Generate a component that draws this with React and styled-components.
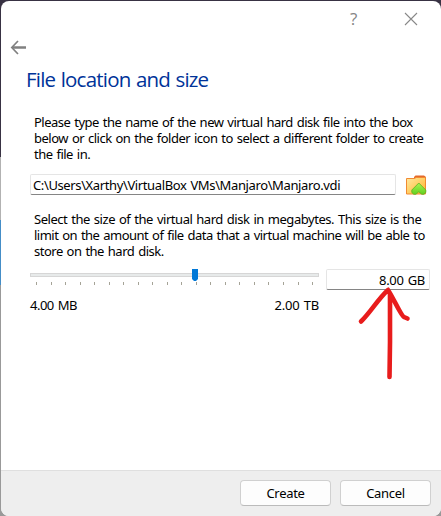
import React from "react";
import styled, { createGlobalStyle } from "styled-components";

const GlobalStyle = createGlobalStyle`
  * { box-sizing: border-box; }
  body { margin: 0; overflow: hidden; }
`;

const Desktop = styled.div`
  width: 441px;
  height: 516px;
  padding: 1px 0 0 1px;
  background: linear-gradient(#383243 0 157px, #b2b2b2 157px 220px, #448dc7 220px 285px, #999 285px);
  font-family: "Noto Sans", sans-serif;
  font-size: 13px;
  color: #000;
`;

const Dialog = styled.main`
  display: flex;
  flex-direction: column;
  height: 515px;
  overflow: hidden;
  border-radius: 8px;
  background: #fff;
`;

const TitleBar = styled.header`
  display: flex;
  flex: none;
  justify-content: flex-end;
  align-items: center;
  height: 35px;
  padding: 1px 23px 0 0;
  gap: 46px;
`;

const HelpMark = styled.span`
  width: 8px;
  color: #858585;
  font: 17px/34px "Open Sans", sans-serif;
`;

const BackRow = styled.div`
  height: 22px;
  padding: 4px 0 0 9px;
  svg { display: block; }
`;

const Heading = styled.h1`
  margin: 5px 0 1px 25px;
  height: 32px;
  font: 400 20.5px/32px "Open Sans", sans-serif;
  letter-spacing: -0.78px;
  word-spacing: 0.8px;
  color: #003399;
  white-space: nowrap;
`;

const Paragraph = styled.p`
  margin: ${(p) => p.$top}px 0 0 33px;
`;

const Line = styled.span`
  display: block;
  height: 16px;
  line-height: 16px;
  white-space: pre;
  letter-spacing: ${(p) => p.$spacing ?? -0.5}px;
  word-spacing: 1px;
`;

const FileRow = styled.div`
  display: flex;
  align-items: center;
  height: 21px;
  margin: 12px 0 0 29px;
  gap: 10px;
`;

const Field = styled.div`
  flex: none;
  width: ${(p) => p.$width}px;
  height: ${(p) => p.$height}px;
  padding: ${(p) => p.$pad};
  border: 1px solid #e5e5e5;
  border-bottom-color: #858585;
  border-radius: 2px;
  background: #fff;
  text-align: ${(p) => p.$align || "left"};
`;

const SizeRow = styled.div`
  display: flex;
  margin: 10px 0 0 29px;
  height: 52px;
  gap: 7px;
`;

const SliderColumn = styled.div`
  width: 289px;
  svg { display: block; }
`;

const Range = styled.div`
  display: flex;
  justify-content: space-between;
  margin-top: 10px;
`;

const Arrow = styled.svg`
  position: absolute;
  left: 350px;
  top: 280px;
`;

const Footer = styled.footer`
  display: flex;
  justify-content: flex-end;
  height: 46px;
  margin-top: auto;
  padding: 9px 10px 0 0;
  gap: 9px;
  border-top: 1px solid #dfdfdf;
  background: #eeeeee;
`;

const Button = styled.button`
  width: 91px;
  height: 26px;
  padding: 0 0 1px;
  border: 1px solid #d0d0d0;
  border-bottom-color: #bbb;
  border-radius: 4px;
  background: #fdfdfd;
  font: 13px/22px "Noto Sans", sans-serif;
  letter-spacing: -0.3px;
  color: #000;
`;

const ticks = Array.from({ length: 20 }, (_, i) => Math.round(6 + i * 14.53));

const FolderIcon = () => (
  <svg width="21" height="21" viewBox="0 0 21 21">
    <defs>
      <linearGradient id="folder" x1="0" y1="0" x2="1" y2="1">
        <stop offset="0" stopColor="#ffe9a0" />
        <stop offset="1" stopColor="#ffb52b" />
      </linearGradient>
      <linearGradient id="chevron" x1="0" y1="0" x2="0" y2="1">
        <stop offset="0" stopColor="#a8f552" />
        <stop offset="1" stopColor="#62cf20" />
      </linearGradient>
    </defs>
    <path d="M8 4V3L9.500 1.500H18L20 3v16H8z" fill="#e4692b" />
    <path d="M.5 4.500h7.700l2-1h9.300v16.500H.5z" fill="url(#folder)" stroke="#f18a32" />
    <path d="M12.800 9l7 7v2.500l-2 1.800h-2l-3-2.500-3 2.500h-2l-2-1.800V16z" fill="url(#chevron)" stroke="#5fae20" strokeWidth=".8" />
  </svg>
);

export default function App() {
  return (
    <Desktop>
      <GlobalStyle />
      <Dialog>
        <TitleBar>
          <HelpMark>?</HelpMark>
          <svg width="14" height="14" viewBox="0 0 14 14">
            <path d="M1 1l12 12M13 1L1 13" stroke="#888" strokeWidth="1.1" />
          </svg>
        </TitleBar>
        <BackRow>
          <svg width="18" height="16" viewBox="0 0 18 16" fill="none" stroke="#808080">
            <path d="M2 7.500h14" strokeWidth="2.400" />
            <path d="M8 1L1.800 7.500 8 14" strokeWidth="1.700" />
          </svg>
        </BackRow>
        <Heading>File location and size</Heading>
        <Paragraph $top={18}>
          <Line>Please type the name of the new virtual hard disk file into the box</Line>
          <Line>below or click on the folder icon to select a different folder to create</Line>
          <Line>the file in.</Line>
        </Paragraph>
        <FileRow>
          <Field $width={366} $height={21} $pad="2px 0 0 2px">
            <Line $spacing={-0.38}>C:\Users\Xarthy\VirtualBox VMs\Manjaro\Manjaro.vdi</Line>
          </Field>
          <FolderIcon />
        </FileRow>
        <Paragraph $top={16}>
          <Line $spacing={-0.46}>Select the size of the virtual hard disk in megabytes. This size is the</Line>
          <Line $spacing={-0.52}>limit on the amount of file data that a virtual machine will be able to</Line>
          <Line>store on the hard disk.</Line>
        </Paragraph>
        <SizeRow>
          <SliderColumn>
            <svg width="289" height="18" viewBox="0 0 289 18">
              <rect x=".5" y="4.500" width="288" height="3" fill="#e7eaea" stroke="#d6d6d6" />
              {ticks.map((x) => (
                <rect key={x} x={x} y="13" width="1" height="3" fill="#a5a397" />
              ))}
              <path d="M162 0h6v10l-2 2h-2l-2-2z" fill="#0078d7" />
            </svg>
            <Range>
              <Line $spacing={-0.5}>4.00 MB</Line>
              <Line $spacing={-0.2}>2.00 TB</Line>
            </Range>
          </SliderColumn>
          <Field $width={104} $height={21} $align="right" $pad="2px 4px 0 0">
            <Line $spacing={-0.3}>8.00 GB</Line>
          </Field>
        </SizeRow>
        <Footer>
          <Button>Create</Button>
          <Button>Cancel</Button>
        </Footer>
      </Dialog>
      <Arrow width="70" height="104" viewBox="0 0 70 104" fill="none" stroke="#e81c1c" strokeWidth="4.600" strokeLinecap="round" strokeLinejoin="round">
        <path d="M39.500 97L40 62V14L38 10C28 19 20 33 11 41.500M38 10C43 17 51 36 54 37L57.500 38.500" />
      </Arrow>
    </Desktop>
  );
}
